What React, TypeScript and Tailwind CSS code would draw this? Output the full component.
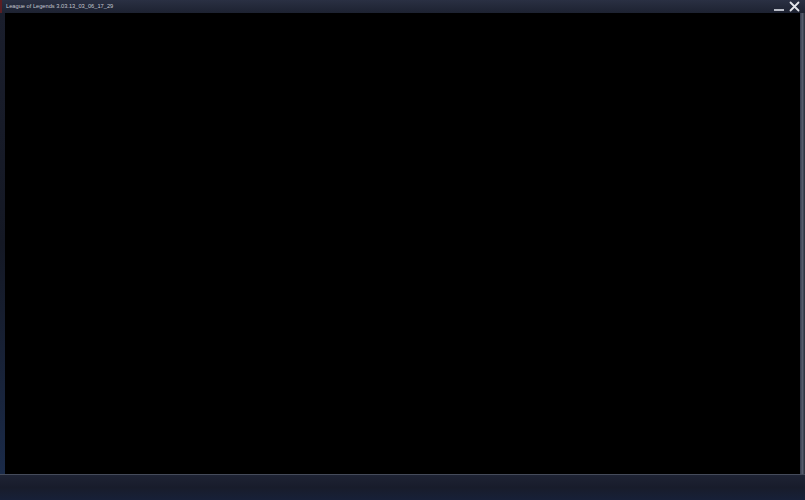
export default function App() {
  return (
    <div className="w-[805px] h-[500px] flex flex-col bg-[#161a26] overflow-hidden" style={{ fontFamily: '"Liberation Sans", Arial, sans-serif' }}>
      {/* title bar */}
      <div className="h-[13px] flex items-center bg-gradient-to-b from-[#2a3043] to-[#1d2231] border-l-2 border-[#5a1e24]">
        <span className="pl-[4px] text-[5.7px] leading-none text-[#c3c6d0] whitespace-nowrap">League of Legends 3.03.13_03_06_17_29</span>
        <div className="ml-auto flex items-center gap-[5px] pr-[5px] h-full">
          <div className="w-[10px] h-[2px] mt-[6px] bg-[#b8bcc6]" />
          <svg width="11" height="11" viewBox="0 0 11 11" className="mb-[1px]">
            <path d="M1.5 1.5 L9.5 9.5 M9.5 1.5 L1.5 9.5" stroke="#e4e6ec" strokeWidth="1.8" strokeLinecap="round" />
          </svg>
        </div>
      </div>
      {/* body */}
      <div className="flex-1 flex">
        <div className="w-[5px] bg-gradient-to-b from-[#1a1e2c] via-[#141824] to-[#1a2a48]" />
        <div className="flex-1 bg-black" />
        <div className="w-[5px] bg-gradient-to-r from-[#34394a] via-[#565b6b] to-[#262a36]" />
      </div>
      {/* bottom bar */}
      <div className="h-[26px] bg-gradient-to-b from-[#1e2334] via-[#181c2b] to-[#172038] border-t border-[#454b5a]" />
    </div>
  );
}
